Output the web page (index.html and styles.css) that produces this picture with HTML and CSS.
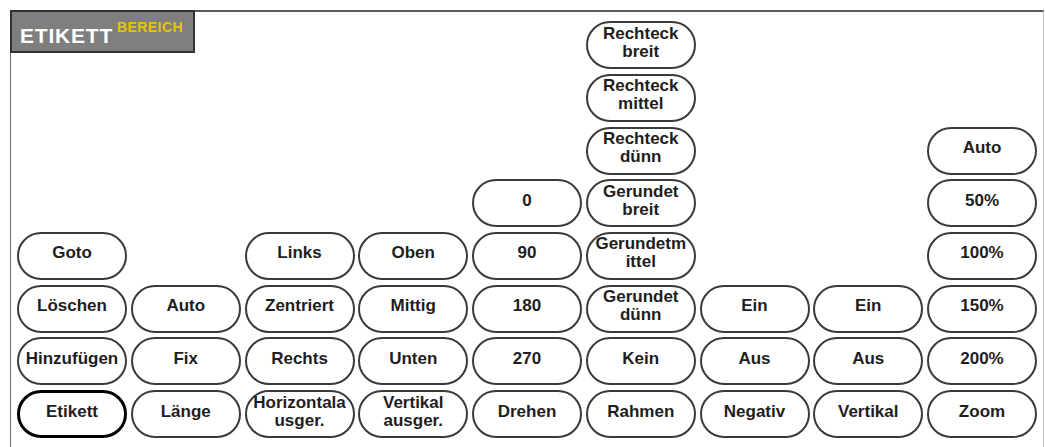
FILE: index.html
```html
<!DOCTYPE html>
<html lang="de">
  <head>
    <meta charset="UTF-8" />
    <meta name="viewport" content="width=device-width, initial-scale=1.0" />
    <title>Etikettbereich</title>
    <link rel="stylesheet" href="styles.css">
  </head>

  <body>
    <div class="panel">
      <div class="title">ETIKETT<span class="title-sup">BEREICH</span></div>

      <div class="board">
        <div class="col">
          <button type="button" class="key">Goto</button>
          <button type="button" class="key">Löschen</button>
          <button type="button" class="key">Hinzufügen</button>
          <button type="button" class="key active">Etikett</button>
        </div>

        <div class="col">
          <button type="button" class="key">Auto</button>
          <button type="button" class="key">Fix</button>
          <button type="button" class="key">Länge</button>
        </div>

        <div class="col">
          <button type="button" class="key">Links</button>
          <button type="button" class="key">Zentriert</button>
          <button type="button" class="key">Rechts</button>
          <button type="button" class="key">Horizontala<br>usger.</button>
        </div>

        <div class="col">
          <button type="button" class="key">Oben</button>
          <button type="button" class="key">Mittig</button>
          <button type="button" class="key">Unten</button>
          <button type="button" class="key">Vertikal<br>ausger.</button>
        </div>

        <div class="col">
          <button type="button" class="key">0</button>
          <button type="button" class="key">90</button>
          <button type="button" class="key">180</button>
          <button type="button" class="key">270</button>
          <button type="button" class="key">Drehen</button>
        </div>

        <div class="col">
          <button type="button" class="key">Rechteck<br>breit</button>
          <button type="button" class="key">Rechteck<br>mittel</button>
          <button type="button" class="key">Rechteck<br>dünn</button>
          <button type="button" class="key">Gerundet<br>breit</button>
          <button type="button" class="key">Gerundetm<br>ittel</button>
          <button type="button" class="key">Gerundet<br>dünn</button>
          <button type="button" class="key">Kein</button>
          <button type="button" class="key">Rahmen</button>
        </div>

        <div class="col">
          <button type="button" class="key">Ein</button>
          <button type="button" class="key">Aus</button>
          <button type="button" class="key">Negativ</button>
        </div>

        <div class="col">
          <button type="button" class="key">Ein</button>
          <button type="button" class="key">Aus</button>
          <button type="button" class="key">Vertikal</button>
        </div>

        <div class="col">
          <button type="button" class="key">Auto</button>
          <button type="button" class="key">50%</button>
          <button type="button" class="key">100%</button>
          <button type="button" class="key">150%</button>
          <button type="button" class="key">200%</button>
          <button type="button" class="key">Zoom</button>
        </div>
      </div>
    </div>
  </body>
</html>
```

FILE: styles.css
```css
body {
  margin: 0;
  background-color: #fff;
  font-family: "Liberation Sans", Arial, sans-serif;
}

.panel {
  position: relative;
  box-sizing: border-box;
  width: 1034px;
  height: 437px;
  margin: 10px 0 0 10px;
  padding: 9px 0 0 6px;
  border-top: 2px solid #5a5a5a;
  border-left: 1px solid #6e6e6e;
  border-right: 1px solid #c4c4c4;
}

/* Titel oben links, liegt über der Tastenfläche */
.title {
  position: absolute;
  top: -2px;
  left: -1px;
  box-sizing: border-box;
  width: 185px;
  height: 43px;
  padding: 13px 0 0 8px;
  background-color: #7f7f7f;
  border: 2px solid #333;
  color: #fff;
  font-size: 21px;
  font-weight: bold;
  line-height: 21px;
  letter-spacing: 0.8px;
}

.title-sup {
  margin-left: 4px;
  color: #e9c400;
  font-size: 14px;
  line-height: 0;
  letter-spacing: 0.4px;
  vertical-align: 11px;
}

.board {
  display: flex;
  gap: 3.75px;
  height: 417px;
}

.col {
  display: flex;
  flex-direction: column;
  justify-content: flex-end;
  gap: 4.7px;
  width: 110px;
}

.key {
  display: flex;
  align-items: center;
  justify-content: center;
  box-sizing: border-box;
  width: 110px;
  height: 48px;
  margin: 0;
  padding: 0 0 5px;
  background-color: #fff;
  border: 2px solid #3a3a3a;
  border-radius: 24px;
  color: #1e1e1e;
  font-family: inherit;
  font-size: 17px;
  font-weight: bold;
  line-height: 18px;
  text-align: center;
  white-space: nowrap;
  cursor: pointer;
}

.key.active {
  border: 3px solid #000;
}
```
